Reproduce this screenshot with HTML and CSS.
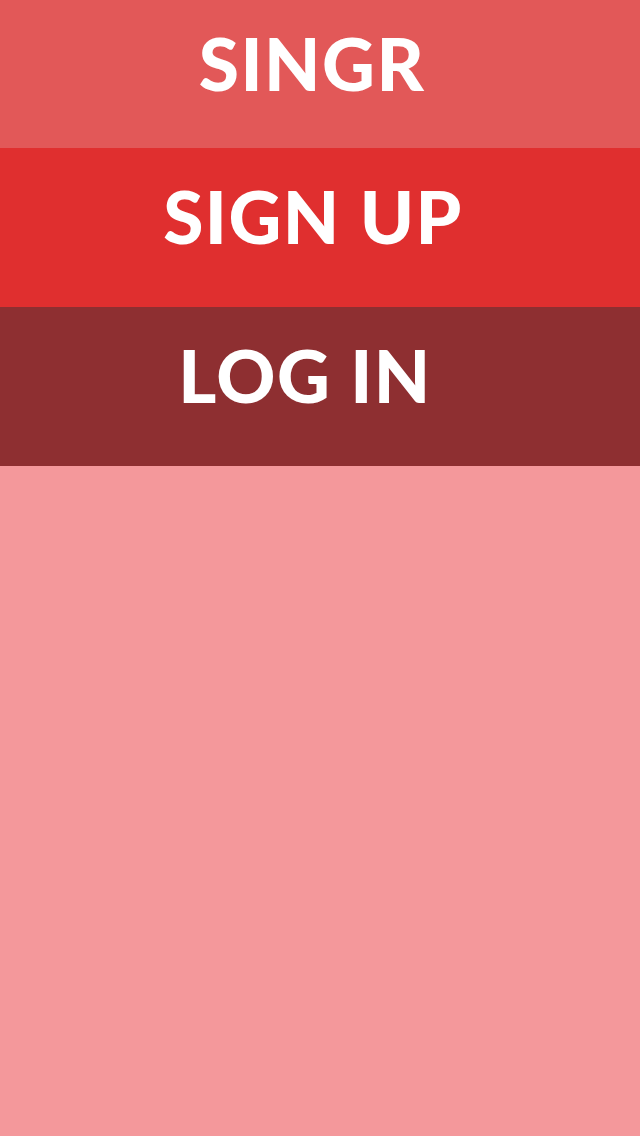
FILE: index.html
```html
<!DOCTYPE html>
<html>
<head>
<meta charset="utf-8">
<link rel="stylesheet" href="styles.css">
</head>
<body>
<div class="screen">
  <header class="band band-title"><span class="label">SINGR</span></header>
  <div class="band band-signup"><span class="label">SIGN UP</span></div>
  <div class="band band-login"><span class="label label-login">LOG IN</span></div>
  <div class="rest"></div>
</div>
</body>
</html>
```
FILE: styles.css
```css
html, body {
  margin: 0;
  padding: 0;
}
body {
  width: 640px;
  height: 1136px;
  background: #f4989b;
  font-family: "Lato", "Open Sans", sans-serif;
}
.screen {
  display: flex;
  flex-direction: column;
  height: 1136px;
}
.band {
  display: flex;
  align-items: center;
  justify-content: center;
  padding-bottom: 22px;
  box-sizing: border-box;
}
.band-title {
  height: 148px;
  background: #e25858;
  padding-right: 16px;
}
.band-signup {
  height: 159px;
  background: #e02f2f;
  padding-right: 14px;
}
.band-login {
  height: 159px;
  background: #8e2f31;
  padding-right: 30px;
}
.label {
  color: #ffffff;
  font-weight: 900;
  font-size: 73px;
  line-height: 1;
  letter-spacing: 1.5px;
}
.rest {
  flex: 1;
  background: #f4989b;
}
```
